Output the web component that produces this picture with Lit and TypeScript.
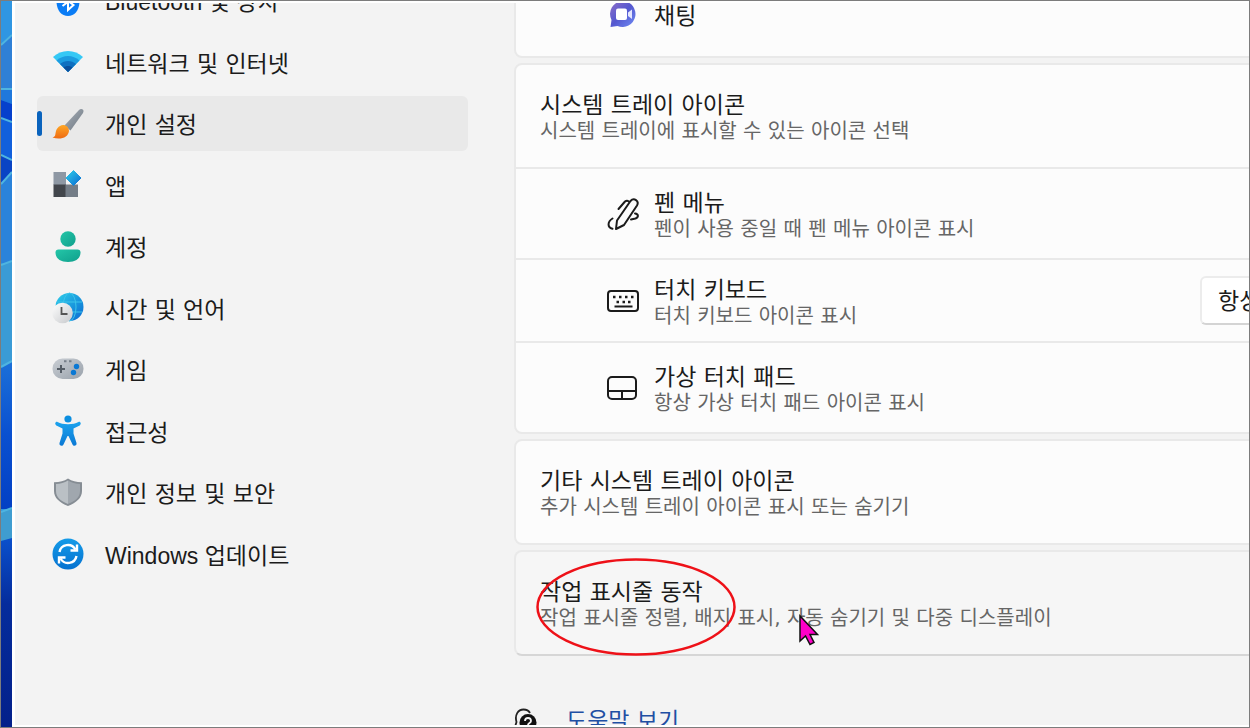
import { LitElement, html, svg, css } from "lit";
import { customElement, property } from "lit/decorators.js";

const icons: Record<string, unknown> = {
  bluetooth: svg`<path d="M16 2c7 0 11.500 5 11.500 14s-4.500 15-11.500 15S4.500 25 4.500 16 9 2 16 2z" fill="#0a7cf5"/>
    <path d="M10.500 12l11 8-5.500 5V8.500l5.500 4-11 8.500" fill="none" stroke="#fff" stroke-width="2"/>`,
  wifi: svg`<path d="M1 11C9 3 23 3 31 11L16 26z" fill="#35c8f5"/>
    <path d="M4.500 14.500C11 8.500 21 8.500 27.500 14.500L16 26z" fill="#1c9ce0"/>
    <path d="M8 18C12.500 14 19.500 14 24 18L16 26z" fill="#0f70c0"/>
    <path d="M11.500 21.500C14 19.500 18 19.500 20.500 21.500L16 26z" fill="#0a4f9c"/>`,
  brush: svg`<path d="M29.500 1c2 .3 2.500 2 1.500 4L18.500 22.500l-6-5L27 2C27.800 1.200 28.500.9 29.500 1z" fill="url(#g-steel)"/>
    <path d="M8 18c3.500-2.500 9 0 9 5C16.500 29 9 32.500 .5 29.500c3.500-1 2.500-3 3.500-6.500C4.800 20.500 6.200 19 8 18z" fill="url(#g-orange)"/>`,
  apps: svg`<rect x="1.500" y="3" width="12.500" height="13" fill="#8e98a4"/>
    <rect x="1.500" y="15.500" width="12.500" height="12.500" fill="#42464c"/>
    <rect x="13.500" y="15.500" width="12.500" height="12.500" fill="#747d87"/>
    <path d="M21.500 1.500l7.500 7.500-7.500 7.500L14 9z" fill="url(#g-blue)" stroke="url(#g-blue)" stroke-linejoin="round"/>`,
  person: svg`<circle cx="16" cy="8" r="7.700" fill="url(#g-teal)"/>
    <path d="M6.500 18.500h19c2 0 3 1.200 3 3 0 6-5 9.500-12.500 9.500S3.500 27.500 3.500 21.500c0-1.800 1-3 3-3z" fill="url(#g-teal)"/>`,
  clock: svg`<circle cx="17.500" cy="15" r="14" fill="url(#g-blue)"/>
    <g fill="none" stroke="#3cc4ea" stroke-width="1"><ellipse cx="17.500" cy="15" rx="6.500" ry="14"/><path d="M5 10h25M5 20h25"/></g>
    <circle cx="10.500" cy="21" r="10.300" fill="url(#g-light)"/>
    <path d="M9.500 15v7h6" fill="none" stroke="#555" stroke-width="1.800"/>`,
  game: svg`<rect x=".5" y="4.500" width="31" height="20.500" rx="10" fill="url(#g-light2)"/>
    <path d="M9 11v8M5 15h8" stroke="#555d66" stroke-width="2"/>
    <circle cx="24.500" cy="12.500" r="2.700" fill="#0a78d4"/><circle cx="21.500" cy="18.500" r="2.700" fill="#0a78d4"/>
    <path d="M12 7.300h2.500M17 7.300h2.500" stroke="#77808a" stroke-width="2"/>`,
  access: svg`<circle cx="16" cy="4" r="3.600" fill="#0a8ee0"/>
    <path d="M5.500 7c3 1.300 6 2.300 10.500 2.300s7.500-1 10.500-2.300c2.200-.8 3.200 2.400 1.200 3.400L21.500 13.500v5l3 9.500c.7 2.700-3 3.800-4 1.500L16.500 21h-1l-4 8.500c-1 2.300-4.700 1.200-4-1.500l3-9.500v-5l-6.200-3.100c-2-1-1-4.200 1.200-3.400z" fill="url(#g-access)"/>`,
  shield: svg`<path d="M16 1.500c4 2.600 8 3.600 14 3.800v8.700c0 7-5.500 11.500-14 15C7.500 25.500 2 21 2 14V5.300c6-.2 10-1.200 14-3.800z" fill="#868d94"/>
    <path d="M16 3.500c3.800 2.300 7.500 3.200 12 3.500v7c0 6-4.500 10-12 13z" fill="#a0a7ae"/>
    <path d="M16 3.500C12.200 5.800 8.500 6.700 4 7v7c0 6 4.500 10 12 13z" fill="#bac0c5"/>`,
  update: svg`<circle cx="16" cy="16" r="15.500" fill="url(#g-update)"/>
    <g fill="none" stroke="#fff" stroke-width="2.400"><path d="M7.500 14c1.500-8 12-9.500 16-2.500M24.500 18c-1.500 8-12 9.500-16 2.500"/>
    <path d="M25 6.500v6h-6.500M7 25.500v-6h6.500"/></g>`,
  chat: svg`<path d="M16 2a13 13 0 1 1-5.500 25L3.500 28l1-7A13 13 0 0 1 16 2z" fill="url(#g-chat)"/>
    <rect x="9" y="9.500" width="11" height="11.500" rx="2" fill="#fff"/><path d="M21 13.500l4-3v9.500l-4-3z" fill="#e4e6ff"/>`,
  pen: svg`<g fill="none" stroke="#1b1b1b" stroke-width="2" stroke-linecap="round" stroke-linejoin="round">
    <path d="M9 31l1-8.500L23.500 3c3.500-4 9 0 6.500 4.500L17 27z"/>
    <path d="M11.500 11L18 3.500c1.500-1.300 3-1 4 .2M5.500 20.500c-5 3-5.500 9 0 10.300M28 15.500c3.500.5 4 3.500.5 5l-4.500 1"/></g>`,
  keyboard: svg`<rect x="1" y="6" width="30" height="20" rx="3" fill="none" stroke="#1b1b1b" stroke-width="2"/>
    <path d="M7.500 21.500h18" stroke="#1b1b1b" stroke-width="2"/>
    <path d="M6 12h2.500M12 12h2.500M18 12h2.500M24 12h2.500M9.500 17H12M15.500 17H18M21 17h2.500" stroke="#1b1b1b" stroke-width="2.500"/>`,
  touchpad: svg`<rect x="1" y="5" width="28" height="22" rx="4" fill="none" stroke="#1b1b1b" stroke-width="2"/>
    <path d="M1 19h28M15 19v8" stroke="#1b1b1b" stroke-width="2"/>`,
  help: svg`<path d="M5 24l-4-2 1.500-5C.5 10 4 4.500 9.500 4.500c3 0 5.500 1.500 6.500 3.500" fill="none" stroke="#222" stroke-width="1.800"/>
    <circle cx="14" cy="17.500" r="8.500" fill="#111"/>
    <path d="M11 16c0-4 6-4 6 0 0 2-3 2-3 4M14 21.500v2" fill="none" stroke="#f3f3f3" stroke-width="1.800"/>`,
};

const defs = svg`<defs>
  <linearGradient id="g-steel" x1="0" y1="0" x2="1" y2="1"><stop stop-color="#a9b1ba"/><stop offset="1" stop-color="#6d7680"/></linearGradient>
  <linearGradient id="g-orange" x1="0" y1="0" x2="0" y2="1"><stop stop-color="#ffa726"/><stop offset="1" stop-color="#ee6a12"/></linearGradient>
  <linearGradient id="g-blue" x1="0" y1="0" x2="1" y2="1"><stop stop-color="#2fd0ea"/><stop offset="1" stop-color="#0868d2"/></linearGradient>
  <linearGradient id="g-teal" x1="0" y1="0" x2="1" y2="1"><stop stop-color="#24c6a8"/><stop offset="1" stop-color="#0f9f8c"/></linearGradient>
  <linearGradient id="g-light" x1="0" y1="0" x2="1" y2="1"><stop stop-color="#fff"/><stop offset="1" stop-color="#c6c8cb"/></linearGradient>
  <linearGradient id="g-light2" x1="0" y1="0" x2="1" y2="1"><stop stop-color="#c9ced4"/><stop offset="1" stop-color="#9aa2ab"/></linearGradient>
  <linearGradient id="g-access" x1="0" y1="0" x2="0" y2="1"><stop stop-color="#1ba3ee"/><stop offset="1" stop-color="#0a78d4"/></linearGradient>
  <linearGradient id="g-update" x1="0" y1="0" x2="0" y2="1"><stop stop-color="#149be8"/><stop offset="1" stop-color="#0672d0"/></linearGradient>
  <linearGradient id="g-chat" x1="0" y1="0" x2="1" y2="1"><stop stop-color="#8f6fc8"/><stop offset=".5" stop-color="#5558cf"/><stop offset="1" stop-color="#6f8cf5"/></linearGradient>
</defs>`;

const icon = (name: string) =>
  html`<svg class="icon" viewBox="0 0 32 32" aria-hidden="true">${defs}${icons[name]}</svg>`;

const base = css`
  * { box-sizing: border-box; }
  .icon { display: block; width: 32px; height: 32px; flex: none; overflow: visible; }
`;

@customElement("settings-nav")
class SettingsNav extends LitElement {
  static styles = [base, css`
    :host { display: flex; flex-direction: column; }
    .nav { flex: 1; display: flex; flex-direction: column; justify-content: space-between; }
    .item {
      display: flex; align-items: center; gap: 21px; height: 55px; padding: 0 15px;
      border-radius: 6px; color: #1b1b1b; text-decoration: none;
      font-size: 23px; line-height: 32px; white-space: nowrap; position: relative;
    }
    .label { padding-top: 3px; }
    .latin { font-family: "Liberation Sans", "Noto Sans CJK KR", sans-serif; }
    .current { background: #e9e9e9; }
    .current::before {
      content: ""; position: absolute; left: 0; top: 15px; width: 5px; height: 25px;
      border-radius: 3px; background: #0a63bd;
    }
  `];

  private items = [
    ["bluetooth", "Bluetooth 및 장치"],
    ["wifi", "네트워크 및 인터넷"],
    ["brush", "개인 설정"],
    ["apps", "앱"],
    ["person", "계정"],
    ["clock", "시간 및 언어"],
    ["game", "게임"],
    ["access", "접근성"],
    ["shield", "개인 정보 및 보안"],
    ["update", "Windows 업데이트"],
  ];

  render() {
    return html`<nav class="nav">${this.items.map(([name, label]) => html`
      <a class="item ${name === "brush" ? "current" : ""} ${/[A-Z]/.test(label) ? "latin" : ""}" href="#${name}">
        ${icon(name)}<span class="label">${label}</span>
      </a>`)}</nav>`;
  }
}

@customElement("setting-text")
class SettingText extends LitElement {
  @property() heading = "";
  @property() detail = "";
  static styles = css`
    :host { display: block; white-space: nowrap; padding-top: 2px; }
    .heading { font-size: 23px; line-height: 28px; color: #1b1b1b; }
    .detail { font-size: 20px; line-height: 24px; color: #666; }
  `;
  render() {
    return html`<div class="heading">${this.heading}</div>
      ${this.detail ? html`<div class="detail">${this.detail}</div>` : ""}`;
  }
}

@customElement("app-root")
class AppRoot extends LitElement {
  static styles = [base, css`
    :host {
      display: block; height: 100vh; overflow: hidden; position: relative;
      font-family: "DejaVu Sans", "Noto Sans CJK KR", sans-serif;
    }
    .screen { display: flex; height: 100%; border: 1px solid #7c7c7c; overflow: hidden; }
    .wallpaper { flex: none; width: 11px; height: 100%; display: block; }
    .window {
      flex: 1; min-width: 0; display: flex; background: #f3f3f3; overflow: hidden;
      border-left: 3px solid #fff; border-top: 2px solid #fff; border-bottom: 2px solid #fff;
    }
    .sidebar { flex: none; width: 453px; margin-top: -30px; padding: 0 0 143px 22px; }
    .main { flex: 1; min-width: 0; padding-left: 46px; }
    .cards { display: flex; flex-direction: column; gap: 5px; margin-right: -80px; margin-top: -32px; }
    .card { border: 2px solid #e9e9e9; border-radius: 8px; background: #fcfcfc; }
    .row { display: flex; align-items: center; gap: 15px; padding: 0 20px 0 91px; height: 91px; }
    .row + .row { border-top: 2px solid #e9e9e9; }
    .short { height: 83px; }
    .head { padding-left: 24px; height: 102px; }
    .hover { background: #f6f6f6; border-bottom-color: #d6d6d6; }
    .grow { flex: 1; }
    .choice {
      appearance: none; width: 107px; height: 49px; padding: 0 16px;
      border: 2px solid #ececec; border-bottom-color: #d4d4d4; border-radius: 6px;
      background: #fff; color: #1b1b1b; font: inherit; font-size: 23px;
    }
    .help { display: flex; align-items: center; gap: 20px; margin-top: 47px; height: 36px; width: max-content;
      color: #1f4fa3; font-size: 23px; line-height: 32px; text-decoration: none; }
    .mark { position: absolute; left: 535px; top: 557px; width: 202px; height: 100px; }
    .pointer { position: absolute; left: 798px; top: 614px; width: 22px; height: 32px; }
  `];

  render() {
    return html`
      <div class="screen">
        <svg class="wallpaper" viewBox="0 0 11 726" preserveAspectRatio="none" aria-hidden="true">
          <defs>
            <linearGradient id="w2" x1="0" y1="0" x2="0" y2="1">
              <stop stop-color="#1c70d8"/><stop offset=".5" stop-color="#0a50d0"/><stop offset="1" stop-color="#0340c4"/>
            </linearGradient>
            <linearGradient id="w3" x1="0" y1="0" x2="0" y2="1">
              <stop stop-color="#0a50cc"/><stop offset=".35" stop-color="#052c9c"/><stop offset="1" stop-color="#03208a"/>
            </linearGradient>
          </defs>
          <rect width="11" height="726" fill="#2f96e2"/>
          <path d="M0 44L11 34V88H0z" fill="#2f80d6"/>
          <path d="M0 88H11V103L0 99z" fill="#1f78dc"/>
          <path d="M0 99L11 103V121L0 117z" fill="#0640cc"/>
          <path d="M0 117L11 121V159L0 154z" fill="#1260dc"/>
          <path d="M0 154L11 159V171L0 183z" fill="#0a44c4"/>
          <path d="M0 183L11 171V262H0z" fill="#2b83da"/>
          <path d="M0 264L11 260V360L0 366z" fill="#3a9bd6"/>
          <path d="M0 366L11 360V508H0z" fill="url(#w2)"/>
          <path d="M0 511L11 507V538L0 540z" fill="#3f9dd0"/>
          <path d="M0 540L11 537V726H0z" fill="url(#w3)"/>
          <path d="M0 44L11 34M0 88H11M0 117L11 121M0 154L11 159M0 183L11 171M0 264L11 260M0 366L11 360M0 511L11 507"
            fill="none" stroke="#4fb4e0" stroke-width="2"/>
        </svg>
        <div class="window">
          <settings-nav class="sidebar"></settings-nav>
          <main class="main">
            <div class="cards">
              <section class="card"><div class="row short">${icon("chat")}<setting-text heading="채팅"></setting-text></div></section>
              <section class="card">
                <div class="row head"><setting-text heading="시스템 트레이 아이콘" detail="시스템 트레이에 표시할 수 있는 아이콘 선택"></setting-text></div>
                <div class="row">${icon("pen")}<setting-text heading="펜 메뉴" detail="펜이 사용 중일 때 펜 메뉴 아이콘 표시"></setting-text></div>
                <div class="row short">${icon("keyboard")}<setting-text class="grow" heading="터치 키보드" detail="터치 키보드 아이콘 표시"></setting-text>
                  <select class="choice" aria-label="터치 키보드"><option>항상</option></select></div>
                <div class="row">${icon("touchpad")}<setting-text heading="가상 터치 패드" detail="항상 가상 터치 패드 아이콘 표시"></setting-text></div>
              </section>
              <section class="card"><div class="row head"><setting-text heading="기타 시스템 트레이 아이콘" detail="추가 시스템 트레이 아이콘 표시 또는 숨기기"></setting-text></div></section>
              <section class="card hover"><div class="row head"><setting-text heading="작업 표시줄 동작" detail="작업 표시줄 정렬, 배지 표시, 자동 숨기기 및 다중 디스플레이"></setting-text></div></section>
            </div>
            <a class="help" href="#help">${icon("help")}<span>도움말 보기</span></a>
          </main>
        </div>
      </div>
      <svg class="mark" viewBox="0 0 202 100" aria-hidden="true">
        <ellipse cx="101" cy="50" rx="98.500" ry="47.500" fill="none" stroke="#ee1118" stroke-width="2.500"/>
      </svg>
      <svg class="pointer" viewBox="0 0 22 32" aria-hidden="true">
        <path d="M2 2v25l5.500-5 4.500 8.500 4-2-4-8h7.500z" fill="#ff00c8" stroke="#111" stroke-width="1.500"/>
      </svg>`;
  }
}
